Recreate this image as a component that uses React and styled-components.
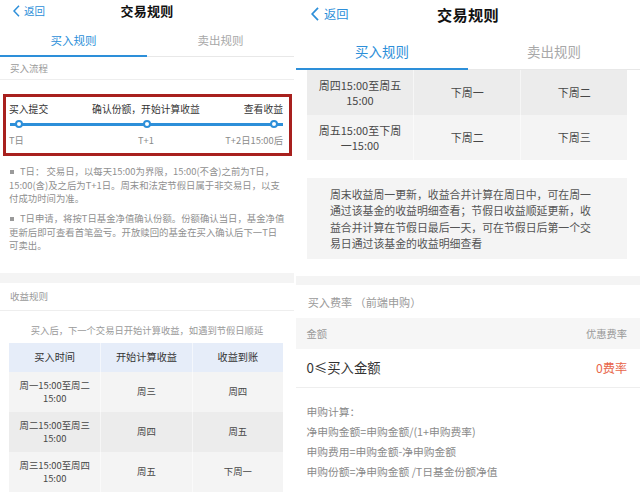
import React from 'react'
import styled, { createGlobalStyle } from 'styled-components'

const BLUE = '#2d8fd9'

const GlobalStyle = createGlobalStyle`
  html, body { margin: 0; padding: 0; background: #fff; }
  body { font-family: "Noto Sans CJK SC", "Noto Sans", sans-serif; color: #333; }
  * { box-sizing: border-box; }
`

const Page = styled.div`
  display: flex;
  gap: 2px;
  width: 640px;
  height: 492px;
  overflow: hidden;
  background: #fff;
`

const Phone = styled.div`
  width: 294px;
  height: ${p => p.$h}px;
  zoom: ${p => p.$zoom || 1};
  flex-shrink: 0;
  overflow: hidden;
  display: flex;
  flex-direction: column;
  background: #fff;
`

const Nav = styled.div`
  height: ${p => p.$h}px;
  flex-shrink: 0;
  display: grid;
  grid-template-columns: 1fr auto 1fr;
  align-items: center;
  padding: 0 10px;
`

const Back = styled.div`
  display: flex;
  align-items: center;
  gap: 4px;
  margin-left: 3px;
  color: ${BLUE};
  font-size: 10.5px;
`

const Title = styled.div`
  font-size: 13px;
  font-weight: 700;
  color: #111;
  letter-spacing: 0.3px;
`

const Tabs = styled.div`
  height: 36px;
  flex-shrink: 0;
  display: flex;
  border-bottom: 1px solid #e8e8e8;
`

const Tab = styled.div`
  flex: 1;
  display: flex;
  align-items: center;
  justify-content: center;
  padding-top: 4px;
  margin-bottom: -1px;
  font-size: 11.5px;
  color: ${p => (p.$active ? BLUE : '#a8a8a8')};
  border-bottom: 2px solid ${p => (p.$active ? BLUE : 'transparent')};
`

const SectionTitle = styled.div`
  height: ${p => p.$h}px;
  flex-shrink: 0;
  display: flex;
  align-items: center;
  padding: 0 10px;
  font-size: 9.5px;
  color: #9a9a9a;
  border-bottom: ${p => (p.$line ? '1px solid #eeeeee' : 'none')};
`

const Band = styled.div`
  height: ${p => p.$h}px;
  flex-shrink: 0;
  margin-top: ${p => p.$mt || 0}px;
  background: #f4f4f4;
`

const ProcessBox = styled.div`
  margin: 14px 2px 0 3px;
  border: 3px solid #a8201e;
  padding: 5px 0 6px;
`

const LabelRow = styled.div`
  display: grid;
  grid-template-columns: 1fr auto 1fr;
  align-items: center;
  height: 14px;
  padding: 0 6px 0 3px;
  margin-top: ${p => p.$mt || 0}px;
  font-size: ${p => (p.$muted ? '9.3px' : '9.8px')};
  color: ${p => (p.$muted ? '#8a8a8a' : '#333')};
  & > :last-child { text-align: right; }
`

const Track = styled.div`
  height: 10px;
  margin: 3px 6px 0 4px;
  padding: 0 5px 0 5px;
  display: flex;
  justify-content: space-between;
  align-items: center;
  background: linear-gradient(${BLUE}, ${BLUE}) center / 100% 3px no-repeat;
`

const Dot = styled.span`
  width: 8px;
  height: 8px;
  border-radius: 50%;
  border: 2px solid ${BLUE};
  background: #fff;
`

const Notes = styled.div`
  padding: 9px 10px 20px 9px;
  font-size: 9.4px;
  line-height: 13.5px;
  color: #8f8f8f;
  white-space: nowrap;
`

const Note = styled.p`
  margin: ${p => (p.$first ? 0 : '6.5px')} 0 0;
`

const Bullet = styled.span`
  display: inline-block;
  width: 4px;
  height: 4px;
  margin: 0 6px 0 1px;
  vertical-align: middle;
  background: #9a9a9a;
`

const Caption = styled.div`
  padding: 12px 0 6px;
  text-align: center;
  font-size: 9.3px;
  line-height: 14px;
  color: #9a9a9a;
`

const Table = styled.div`
  margin: 0 11px 0 9px;
  display: flex;
  flex-direction: column;
  flex-shrink: 0;
`

const Row = styled.div`
  display: grid;
  grid-template-columns: repeat(3, 1fr);
  height: ${p => p.$h}px;
  flex-shrink: 0;
  background: ${p => (p.$head ? '#e6edf9' : p.$alt ? '#ececec' : '#f4f4f4')};
  font-size: ${p => (p.$head ? '10.2px' : '9.4px')};
  color: ${p => (p.$head ? '#333' : '#474747')};
`

const Cell = styled.div`
  display: flex;
  align-items: center;
  justify-content: center;
  text-align: center;
  line-height: 12.5px;
  & + & { border-left: 1px solid rgba(255, 255, 255, 0.55); }
`

const InfoBox = styled.div`
  margin: 15px 11px 0 9px;
  padding: 7px 20px 6px 20px;
  background: #f4f4f4;
  font-size: 9.3px;
  line-height: 14px;
  color: #555;
  white-space: nowrap;
`

const FeeHead = styled.div`
  height: 26.5px;
  flex-shrink: 0;
  display: flex;
  align-items: center;
  justify-content: space-between;
  padding: 0 11px 0 9px;
  background: #f6f6f6;
  font-size: 8.8px;
  color: #9a9a9a;
`

const FeeRow = styled.div`
  height: 33px;
  flex-shrink: 0;
  display: flex;
  align-items: center;
  justify-content: space-between;
  padding: 0 11px 0 9px;
  border-bottom: 1px solid #eeeeee;
  font-size: 11.4px;
  color: #333;
`

const Rate = styled.span`
  font-size: 10.4px;
  color: #e8664a;
`

const Formulas = styled.div`
  padding: 12.5px 9px;
  font-size: 9.2px;
  line-height: 17px;
  color: #8a8a8a;
`

const Chevron = () => (
  <svg width="7" height="12" viewBox="0 0 7 12">
    <polyline points="6,0.8 1,6 6,11.2" fill="none" stroke={BLUE} strokeWidth="1.5" />
  </svg>
)

const Header = ({ navH }) => (
  <>
    <Nav $h={navH}>
      <Back>
        <Chevron />
        返回
      </Back>
      <Title>交易规则</Title>
      <div />
    </Nav>
    <Tabs>
      <Tab $active>买入规则</Tab>
      <Tab>卖出规则</Tab>
    </Tabs>
  </>
)

const rows = [
  ['周一15:00至周二', '15:00', '周三', '周四'],
  ['周二15:00至周三', '15:00', '周四', '周五'],
  ['周三15:00至周四', '15:00', '周五', '下周一'],
  ['周四15:00至周五', '15:00', '下周一', '下周二'],
  ['周五15:00至下周', '一15:00', '下周二', '下周三'],
]

const TableRows = ({ from, to, h }) =>
  rows.slice(from, to).map((r, i) => (
    <Row key={r[0]} $h={h} $alt={(from + i) % 2 === 1}>
      <Cell>
        {r[0]}
        <br />
        {r[1]}
      </Cell>
      <Cell>{r[2]}</Cell>
      <Cell>{r[3]}</Cell>
    </Row>
  ))

const LeftScreen = () => (
  <Phone $h={492}>
    <Header navH={21} />
    <SectionTitle $h={23} $line>买入流程</SectionTitle>
    <ProcessBox>
      <LabelRow>
        <span>买入提交</span>
        <span>确认份额，开始计算收益</span>
        <span>查看收益</span>
      </LabelRow>
      <Track>
        <Dot />
        <Dot />
        <Dot />
      </Track>
      <LabelRow $muted $mt={4}>
        <span>T日</span>
        <span>T+1</span>
        <span>T+2日15:00后</span>
      </LabelRow>
    </ProcessBox>
    <Notes>
      <Note $first>
        <Bullet />T日： 交易日，以每天15:00为界限，15:00(不含)之前为T日，
        <br />
        15:00(含)及之后为T+1日。周末和法定节假日属于非交易日，以支
        <br />
        付成功时间为准。
      </Note>
      <Note>
        <Bullet />T日申请，将按T日基金净值确认份额。份额确认当日，基金净值
        <br />
        更新后即可查看首笔盈亏。开放赎回的基金在买入确认后下一T日
        <br />
        可卖出。
      </Note>
    </Notes>
    <Band $h={10} />
    <SectionTitle $h={28} $line>收益规则</SectionTitle>
    <Caption>买入后，下一个交易日开始计算收益，如遇到节假日顺延</Caption>
    <Table>
      <Row $head $h={29}>
        <Cell>买入时间</Cell>
        <Cell>开始计算收益</Cell>
        <Cell>收益到账</Cell>
      </Row>
      <TableRows from={0} to={3} h={40} />
    </Table>
  </Phone>
)

const RightScreen = () => (
  <Phone $h={420.5} $zoom={1.17}>
    <Header navH={24} />
    <Table>
      <TableRows from={3} to={5} h={38.5} />
    </Table>
    <InfoBox>
      周末收益周一更新，收益合并计算在周日中，可在周一
      <br />
      通过该基金的收益明细查看；节假日收益顺延更新，收
      <br />
      益合并计算在节假日最后一天，可在节假日后第一个交
      <br />
      易日通过该基金的收益明细查看
    </InfoBox>
    <Band $h={8} $mt={15} />
    <SectionTitle $h={28}>买入费率 （前端申购）</SectionTitle>
    <FeeHead>
      <span>金额</span>
      <span>优惠费率</span>
    </FeeHead>
    <FeeRow>
      <span>0≤买入金额</span>
      <Rate>0费率</Rate>
    </FeeRow>
    <Formulas>
      申购计算：
      <br />
      净申购金额=申购金额/(1+申购费率)
      <br />
      申购费用=申购金额-净申购金额
      <br />
      申购份额=净申购金额 /T日基金份额净值
    </Formulas>
  </Phone>
)

export default function App() {
  return (
    <>
      <GlobalStyle />
      <Page>
        <LeftScreen />
        <RightScreen />
      </Page>
    </>
  )
}
